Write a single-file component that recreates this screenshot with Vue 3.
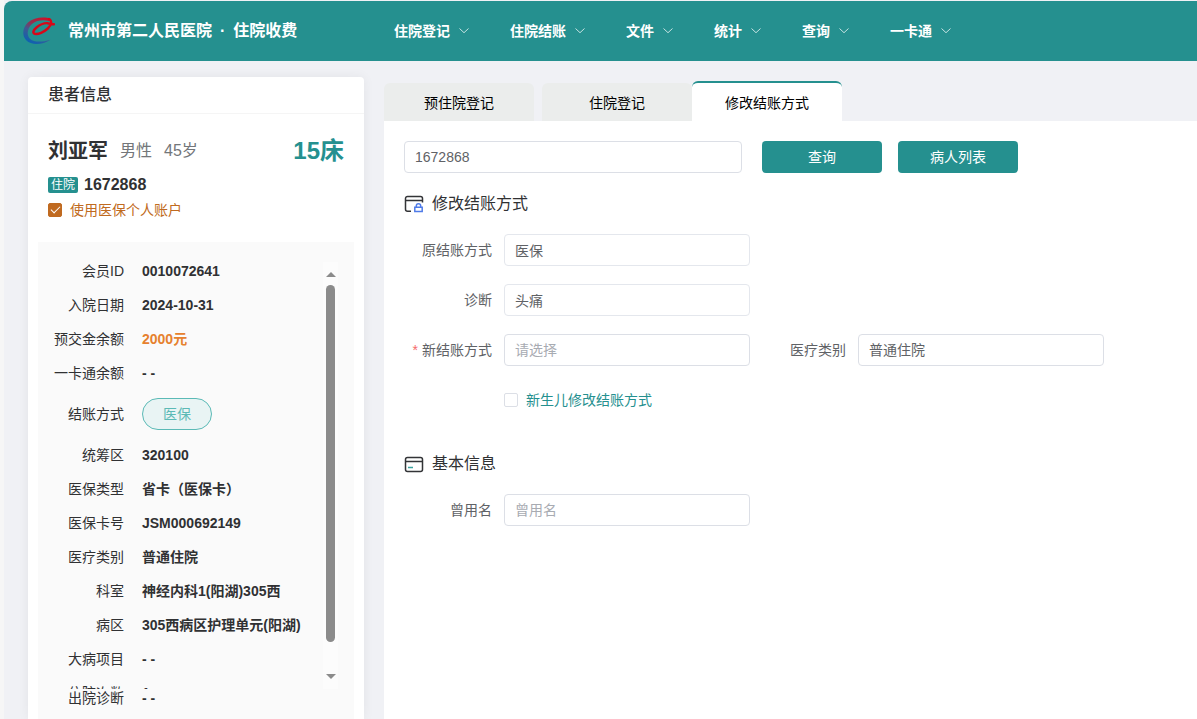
<script setup>
import { ref } from 'vue'

const menus = ['住院登记', '住院结账', '文件', '统计', '查询', '一卡通']
const tabs = ['预住院登记', '住院登记', '修改结账方式']
const activeTab = ref(2)
const useAccount = ref(true)
const newborn = ref(false)
const keyword = ref('1672868')
const payType = ref('')
const careType = ref('普通住院')
const formerName = ref('')

const details = [
  { label: '会员ID', value: '0010072641' },
  { label: '入院日期', value: '2024-10-31' },
  { label: '预交金余额', value: '2000元', kind: 'money' },
  { label: '一卡通余额', value: '- -' },
  { label: '结账方式', value: '医保', kind: 'tag' },
  { label: '统筹区', value: '320100' },
  { label: '医保类型', value: '省卡（医保卡）' },
  { label: '医保卡号', value: 'JSM000692149' },
  { label: '医疗类别', value: '普通住院' },
  { label: '科室', value: '神经内科1(阳湖)305西' },
  { label: '病区', value: '305西病区护理单元(阳湖)' },
  { label: '大病项目', value: '- -' },
  { label: '住院次数', value: '1' },
]
</script>

<template>
  <div class="page">
    <header class="topbar">
      <svg class="logo" viewBox="0 0 32 28" aria-hidden="true">
        <defs>
          <linearGradient id="swirl" x1="0.8" y1="0" x2="0.3" y2="1">
            <stop offset="0" stop-color="#d01028" />
            <stop offset="0.35" stop-color="#94304f" />
            <stop offset="0.6" stop-color="#3f5a92" />
            <stop offset="1" stop-color="#0a62b4" />
          </linearGradient>
        </defs>
        <path fill="url(#swirl)" d="M28 1.800C21-.6 11 .2 5 5.500-.5 10.500-1.400 18.500 3.200 23.200c5.500 5.600 16.500 4.600 24.300-.5-8 2.300-16 3-20.300-.7C3.200 18.200 4.200 11.500 9 7 13.500 3.200 20.500 2.600 26 4z" />
        <path class="ring" d="M26 2c3.500 1.800 2.600 6-1.200 9.500-4 3.700-9.600 6-12.900 5.300-2.700-.6-1.600-3.700 1.600-6.300C17 7.600 21.500 6 24.500 6.200c2 .2 2.500 1.300 6.500 1" />
      </svg>
      <div class="brand"><span>常州市第二人民医院</span><span>·</span><span>住院收费</span></div>
      <nav class="menu">
        <button v-for="m in menus" :key="m" type="button">
          {{ m }}
          <svg viewBox="0 0 12 12" aria-hidden="true"><path d="M1.500 3.500 6 7.700l4.500-4.200" /></svg>
        </button>
      </nav>
    </header>

    <div class="body">
      <aside class="patient">
        <h2>患者信息</h2>
        <div class="summary">
          <div class="person">
            <strong class="name">刘亚军</strong>
            <span>男性</span>
            <span>45岁</span>
            <strong class="bed">15床</strong>
          </div>
          <div class="number"><span class="badge">住院</span><strong>1672868</strong></div>
          <label class="check account"><input v-model="useAccount" type="checkbox" /><span>使用医保个人账户</span></label>
        </div>
        <div class="panel">
          <div class="scroller">
            <dl class="list">
              <div v-for="d in details" :key="d.label" class="item">
                <dt>{{ d.label }}</dt>
                <dd :class="d.kind">{{ d.value }}</dd>
              </div>
            </dl>
            <div class="bar" aria-hidden="true">
              <i class="up"></i><i class="thumb"></i><i class="down"></i>
            </div>
          </div>
          <dl class="item last"><dt>出院诊断</dt><dd>- -</dd></dl>
        </div>
      </aside>

      <main>
        <div class="tabs" role="tablist">
          <button
            v-for="(t, i) in tabs"
            :key="t"
            type="button"
            role="tab"
            :aria-selected="i === activeTab"
            :class="{ active: i === activeTab }"
            @click="activeTab = i"
          >{{ t }}</button>
        </div>
        <form class="content" @submit.prevent>
          <div class="query">
            <input v-model="keyword" class="box" type="text" aria-label="住院号" />
            <button type="submit">查询</button>
            <button type="button">病人列表</button>
          </div>

          <h3>
            <svg viewBox="0 0 20 20" aria-hidden="true">
              <path class="line" d="M7 17.200H3.500a2 2 0 0 1-2-2V4.500a2 2 0 0 1 2-2h13a2 2 0 0 1 2 2v4M1.500 6.500h17" />
              <path class="lock" d="M10.800 13.300h7.400v4.200h-7.400zM12.300 13v-1a2.200 2.200 0 0 1 4.400 0v1" />
            </svg>
            修改结账方式
          </h3>
          <div class="fields">
            <div class="field"><label for="old">原结账方式</label><input id="old" class="box soft" type="text" value="医保" readonly /></div>
            <div class="field start"><label for="diag">诊断</label><input id="diag" class="box soft" type="text" value="头痛" readonly /></div>
            <div class="field start">
              <label for="pay"><em>*</em>新结账方式</label>
              <select id="pay" v-model="payType" class="box" :class="{ empty: !payType }">
                <option value="" disabled>请选择</option>
                <option>医保</option>
              </select>
            </div>
            <div class="field">
              <label for="care">医疗类别</label>
              <select id="care" v-model="careType" class="box"><option>普通住院</option></select>
            </div>
            <label class="check newborn start"><input v-model="newborn" type="checkbox" /><span>新生儿修改结账方式</span></label>
          </div>

          <h3 class="second">
            <svg viewBox="0 0 20 20" aria-hidden="true">
              <rect class="line" x="1.500" y="3.500" width="17" height="14" rx="2" />
              <path class="line" d="M1.500 7.500h17" />
              <path class="dash" d="M4 13.500h5" />
            </svg>
            基本信息
          </h3>
          <div class="fields">
            <div class="field"><label for="former">曾用名</label><input id="former" v-model="formerName" class="box" type="text" placeholder="曾用名" /></div>
          </div>
        </form>
      </main>
    </div>
  </div>
</template>

<style>
body {
  margin: 0;
  background: #f0f1f5;
}
</style>

<style scoped>
* {
  box-sizing: border-box;
}
.page {
  display: flex;
  flex-direction: column;
  height: 100vh;
  padding-top: 1px;
  overflow: hidden;
  border-left: 4px solid #f6f6f6;
  background: #f0f1f5;
  color: #303133;
  font: 14px/18px "Liberation Sans", "Noto Sans CJK SC", sans-serif;
}
button, input, select {
  font: inherit;
}
h2, h3, dl, dd {
  margin: 0;
}
.topbar {
  display: flex;
  flex: none;
  align-items: center;
  height: 60px;
  padding-left: 19px;
  border-radius: 8px 0 0 0;
  background: #25908f;
  color: #fff;
}
.logo {
  width: 32px;
  height: 28px;
  margin-right: 13px;
}
.ring {
  fill: none;
  stroke: #d90718;
  stroke-linecap: round;
  stroke-width: 2.4px;
}
.brand {
  display: flex;
  gap: 8px;
  width: 326px;
  font-size: 16px;
  font-weight: 700;
  white-space: nowrap;
}
.menu {
  display: flex;
  gap: 40px;
}
.menu button {
  display: flex;
  align-items: center;
  gap: 8px;
  padding: 0;
  border: 0;
  background: none;
  color: inherit;
  font-weight: 700;
  line-height: 20px;
  white-space: nowrap;
}
.menu svg {
  width: 12px;
  height: 12px;
  fill: none;
  stroke: #c5e3e2;
}
.body {
  display: flex;
  flex: 1;
  gap: 20px;
  min-height: 0;
  padding: 16px 0 0 24px;
}
.patient {
  display: flex;
  flex: none;
  flex-direction: column;
  width: 336px;
  border-radius: 4px 4px 0 0;
  background: #fff;
  box-shadow: 0 0 12px rgba(0, 0, 0, 0.06);
}
h2 {
  height: 37px;
  padding-left: 20px;
  border-bottom: 1px solid #f5f5f5;
  font-size: 16px;
  font-weight: 500;
  line-height: 36px;
}
.summary {
  height: 128px;
  padding: 20px 20px 0;
}
.person {
  display: flex;
  align-items: center;
  gap: 12px;
  height: 34px;
  color: #73767a;
  font-size: 16px;
}
.name {
  color: #303133;
  font-size: 20px;
}
.bed {
  margin-left: auto;
  color: #25908f;
  font-size: 24px;
}
.number {
  display: flex;
  align-items: center;
  gap: 6px;
  height: 34px;
  font-size: 16px;
}
.badge {
  padding: 0 3px;
  border-radius: 2px;
  background: #25908f;
  color: #fff;
  font-size: 12px;
  line-height: 16px;
}
.check {
  display: flex;
  align-items: center;
  gap: 8px;
}
.check input {
  width: 14px;
  height: 14px;
  margin: 0;
  border: 1px solid #dcdfe6;
  border-radius: 2px;
  background: #fff;
  appearance: none;
}
.check input:checked {
  display: grid;
  place-items: center;
  border-color: #c06a20;
  background: #c06a20;
}
.check input:checked::after {
  width: 8px;
  height: 4px;
  margin-bottom: 3px;
  border: solid #fff;
  border-width: 0 0 1px 1px;
  content: "";
  transform: rotate(-45deg);
}
.account {
  color: #c06a20;
  line-height: 16px;
}
.panel {
  display: flex;
  flex: 1;
  flex-direction: column;
  min-height: 0;
  margin: 0 10px;
  padding: 20px 16px 12px 0;
  background: #fafafa;
}
.scroller {
  display: flex;
  flex: 1;
  min-height: 0;
}
.list {
  display: flex;
  flex: 1;
  flex-direction: column;
  gap: 16px;
  overflow: hidden;
}
.item {
  display: flex;
  flex: none;
  align-items: center;
  gap: 18px;
  white-space: nowrap;
}
.item dt {
  width: 86px;
  text-align: right;
}
.item dd {
  font-weight: 700;
}
.item .money {
  color: #e6812e;
}
.item .tag {
  padding: 0 20px;
  border: 1px solid #5bbab6;
  border-radius: 16px;
  background: #e9f4f4;
  color: #5bbab6;
  font-weight: 400;
  line-height: 30px;
}
.bar {
  display: flex;
  flex-direction: column;
  align-items: center;
  width: 15px;
  padding: 10px 0;
  background: #fcfcfc;
}
.up, .down {
  border: 5px solid transparent;
}
.up {
  margin-bottom: 8px;
  border-top: 0;
  border-bottom-color: #8b8b8b;
}
.down {
  margin-top: auto;
  border-bottom: 0;
  border-top-color: #8b8b8b;
}
.thumb {
  flex: 0 1 92%;
  width: 9px;
  margin-bottom: 32px;
  border-radius: 5px;
  background: #8b8b8b;
}
main {
  display: flex;
  flex: 1;
  flex-direction: column;
  min-width: 0;
}
.tabs {
  display: flex;
  align-items: flex-end;
  height: 44px;
}
.tabs button {
  width: 150px;
  height: 38px;
  padding: 2px 0 0;
  border: 0;
  border-radius: 6px 6px 0 0;
  background: #ebedec;
  color: #000;
}
.tabs button:first-child {
  margin-right: 8px;
}
.tabs .active {
  height: 40px;
  border-top: 2px solid #25908f;
  background: #fff;
}
.content {
  flex: 1;
  padding: 19px 20px;
  background: #fff;
  color: #606266;
}
.query {
  display: flex;
  align-items: center;
  gap: 16px;
  height: 34px;
}
.query .box {
  flex: 0 1 338px;
  margin-right: 4px;
}
.query button {
  width: 120px;
  height: 32px;
  padding: 0;
  border: 0;
  border-radius: 4px;
  background: #25908f;
  color: #fff;
}
.box {
  flex: 1;
  min-width: 0;
  height: 32px;
  padding: 0 10px;
  border: 1px solid #dcdfe6;
  border-radius: 4px;
  background: #fff;
  color: #606266;
  appearance: none;
}
.soft {
  border-color: #e4e7ed;
}
.empty, .box::placeholder {
  color: #a8abb2;
}
h3 {
  display: flex;
  align-items: center;
  gap: 8px;
  height: 60px;
  color: #303133;
  font-size: 16px;
  font-weight: 400;
}
h3 svg {
  width: 20px;
  height: 20px;
  fill: none;
  stroke-width: 1.5px;
}
.line {
  stroke: #333437;
}
.lock {
  stroke: #4f7be8;
}
.dash {
  stroke: #3aa39f;
}
.second {
  margin-top: 18px;
}
.fields {
  display: grid;
  grid-template-columns: repeat(2, minmax(0, 346px));
  gap: 18px 8px;
}
.field {
  display: flex;
  align-items: center;
  gap: 12px;
}
.field label {
  width: 88px;
  text-align: right;
  white-space: nowrap;
}
.field em {
  margin-right: 4px;
  color: #f56c6c;
  font-style: normal;
}
.start {
  grid-column-start: 1;
}
.newborn {
  height: 32px;
  padding-left: 100px;
  color: #25908f;
}
</style>
